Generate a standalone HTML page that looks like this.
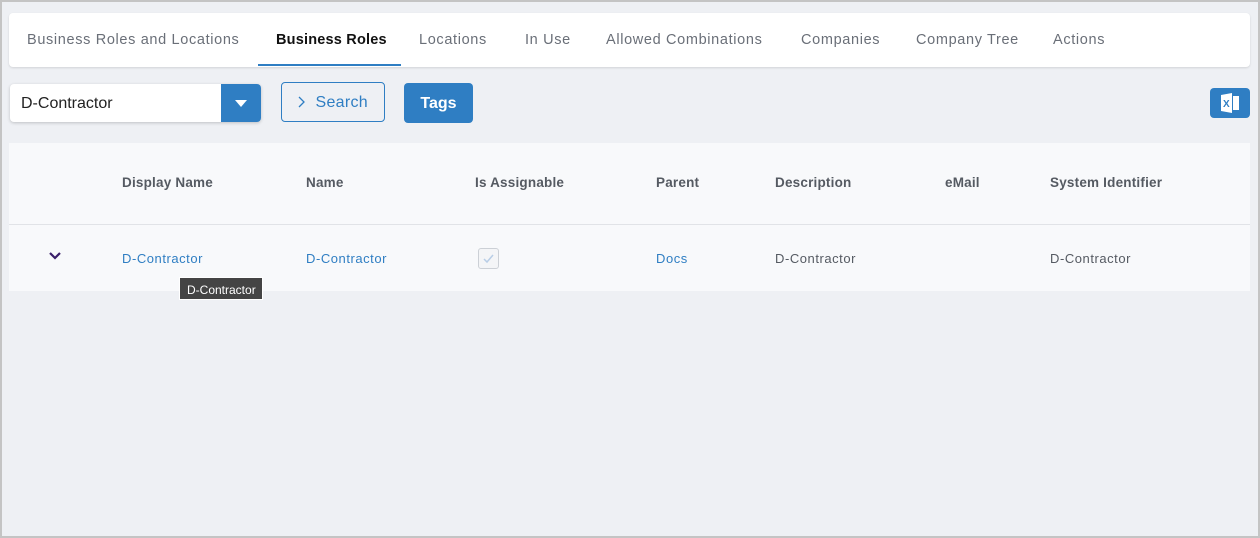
<!DOCTYPE html>
<html><head><style>
*{box-sizing:border-box;margin:0;padding:0}
body{width:1260px;height:538px;background:#eef0f4;font-family:"Liberation Sans",sans-serif;position:relative;overflow:hidden}
.frame{position:absolute;left:0;top:0;width:1260px;height:538px;border:2px solid #c4c4c4}
.tabs{position:absolute;left:9px;top:13px;width:1241px;height:54px;background:#fff;border-radius:4px;box-shadow:0 1px 2px rgba(0,0,0,.12)}
.tab{position:absolute;top:19px;font-size:14.5px;color:#6a6f78;letter-spacing:.65px;white-space:nowrap}
.tab.a{color:#111;font-weight:bold;letter-spacing:.2px}
.ul{position:absolute;left:249px;top:51px;width:143px;height:2px;background:#2f7ec3}
.sel{position:absolute;left:10px;top:84px;width:251px;height:38px;background:#fff;border-radius:4px;box-shadow:0 1px 3px rgba(0,0,0,.2);font-size:16px;color:#222;padding:11px 0 0 11px}
.dd{position:absolute;right:0;top:0;width:40px;height:38px;background:#2f7ec3;border-radius:0 4px 4px 0}
.dd:after{content:"";position:absolute;left:14px;top:16px;border-left:6px solid transparent;border-right:6px solid transparent;border-top:7px solid #fff}
.srch{position:absolute;left:281px;top:82px;width:104px;height:40px;border:1px solid #2f7ec3;border-radius:4px;color:#2f7ec3;font-size:16px;padding:11px 0 0 16px;letter-spacing:.3px}
.tags{position:absolute;left:404px;top:83px;width:69px;height:40px;background:#2f7ec3;border-radius:4px;color:#fff;font-size:16px;font-weight:bold;text-align:center;padding-top:12px}
.xl{position:absolute;left:1210px;top:88px;width:40px;height:30px;background:#2f7ec3;border-radius:4px}
.tbl{position:absolute;left:9px;top:143px;width:1241px;height:148px;background:#f8f9fb}
.hl{position:absolute;left:0;top:81px;width:100%;height:1px;background:#e1e3e7}
.th{position:absolute;top:32px;font-size:13.5px;font-weight:bold;color:#555a62;letter-spacing:.2px}
.td{position:absolute;top:108px;font-size:13px;color:#555a62;letter-spacing:.55px}
.lk{color:#2f7ec3}
.cb{position:absolute;left:469px;top:105px;width:21px;height:21px;border:1px solid #ccd0d6;border-radius:3px;background:#f4f5f7}
.tip{position:absolute;left:179px;top:277px;width:84px;height:23px;background:#444;border:1px solid #fff;color:#fff;font-size:12px;padding:5px 0 0 7px}
</style></head><body>
<div class="frame"></div>
<div class="tabs">
<span class="tab" style="left:18px">Business Roles and Locations</span>
<span class="tab a" style="left:267px">Business Roles</span>
<span class="tab" style="left:410px">Locations</span>
<span class="tab" style="left:516px">In Use</span>
<span class="tab" style="left:597px">Allowed Combinations</span>
<span class="tab" style="left:792px">Companies</span>
<span class="tab" style="left:907px">Company Tree</span>
<span class="tab" style="left:1044px">Actions</span>
<div class="ul"></div>
</div>
<div class="sel">D-Contractor<div class="dd"></div></div>
<div class="srch"><svg width="8" height="12" style="vertical-align:-1px"><path d="M1 1 L6 6 L1 11" stroke="#2f7ec3" stroke-width="1.3" fill="none"/></svg>&nbsp; Search</div>
<div class="tags">Tags</div>
<div class="xl"><svg width="40" height="30" viewBox="0 0 40 30"><path d="M11 7 L22 5 L22 25 L11 23Z" fill="#fff"/><rect x="23" y="8" width="6" height="14" fill="#fff"/><text x="13" y="19" font-size="10" font-weight="bold" fill="#2f7ec3" font-family="Liberation Sans">X</text></svg></div>
<div class="tbl">
<span class="th" style="left:113px">Display Name</span>
<span class="th" style="left:297px">Name</span>
<span class="th" style="left:466px">Is Assignable</span>
<span class="th" style="left:647px">Parent</span>
<span class="th" style="left:766px">Description</span>
<span class="th" style="left:936px">eMail</span>
<span class="th" style="left:1041px">System Identifier</span>
<div class="hl"></div>
<svg style="position:absolute;left:40px;top:109px" width="12" height="8"><path d="M1 1 L6 6 L11 1" stroke="#3a1f6a" stroke-width="2.2" fill="none"/></svg>
<span class="td lk" style="left:113px">D-Contractor</span>
<span class="td lk" style="left:297px">D-Contractor</span>
<div class="cb"><svg width="19" height="19"><path d="M5 10 L8 13 L14 6" stroke="#b8cde6" stroke-width="1.5" fill="none"/></svg></div>
<span class="td lk" style="left:647px">Docs</span>
<span class="td" style="left:766px">D-Contractor</span>
<span class="td" style="left:1041px">D-Contractor</span>
</div>
<div class="tip">D-Contractor</div>
</body></html>
